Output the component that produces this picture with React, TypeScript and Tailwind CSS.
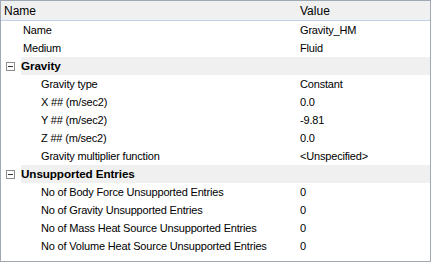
import React from "react";

type Row = { name: string; value?: string; group?: boolean; indent?: number };

const rows: Row[] = [
  { name: "Name", value: "Gravity_HM", indent: 22 },
  { name: "Medium", value: "Fluid", indent: 22 },
  { name: "Gravity", group: true },
  { name: "Gravity type", value: "Constant", indent: 40 },
  { name: "X ## (m/sec2)", value: "0.0", indent: 40 },
  { name: "Y ## (m/sec2)", value: "-9.81", indent: 40 },
  { name: "Z ## (m/sec2)", value: "0.0", indent: 40 },
  { name: "Gravity multiplier function", value: "<Unspecified>", indent: 40 },
  { name: "Unsupported Entries", group: true },
  { name: "No of Body Force Unsupported Entries", value: "0", indent: 40 },
  { name: "No of Gravity Unsupported Entries", value: "0", indent: 40 },
  { name: "No of Mass Heat Source Unsupported Entries", value: "0", indent: 40 },
  { name: "No of Volume Heat Source Unsupported Entries", value: "0", indent: 40 },
];

function Minus() {
  return (
    <svg width="9" height="9" viewBox="0 0 9 9" className="block">
      <rect x="0.5" y="0.5" width="8" height="8" fill="#ffffff" stroke="#8c8c8c" />
      <line x1="2" y1="4.5" x2="7" y2="4.5" stroke="#333333" />
    </svg>
  );
}

export default function App() {
  return (
    <div
      className="w-[431px] h-[262px] bg-white border border-[#a0a8b4] overflow-hidden text-[11px] text-black"
      style={{ fontFamily: '"Liberation Sans", Arial, sans-serif' }}
    >
      <div className="flex h-[20px] bg-[#f0f0f0] border-b border-[#bdd4ec] text-[12px] items-center">
        <div className="w-[298px] pl-[3px]">Name</div>
        <div className="flex-1 pl-[1px]">Value</div>
      </div>
      {rows.map((r, i) =>
        r.group ? (
          <div key={i} className="flex h-[18px] items-center">
            <div className="w-[20px] flex items-center pl-[5px]">
              <Minus />
            </div>
            <div className="flex-1 h-full bg-[#f0f0f0] flex items-center font-bold text-[11.7px] tracking-[-0.1px]">
              {r.name}
            </div>
          </div>
        ) : (
          <div key={i} className="flex h-[18px] items-center tracking-[-0.18px]">
            <div className="w-[299px]" style={{ paddingLeft: r.indent }}>
              {r.name}
            </div>
            <div className="flex-1">{r.value}</div>
          </div>
        )
      )}
    </div>
  );
}
